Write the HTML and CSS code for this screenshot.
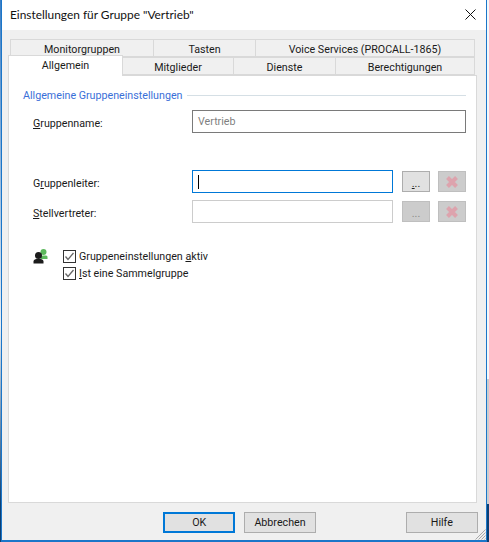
FILE: index.html
```html
<!DOCTYPE html>
<html lang="de">
  <head>
    <meta charset="UTF-8" />
    <title>Einstellungen für Gruppe "Vertrieb"</title>
    <link rel="stylesheet" href="styles.css">
  </head>
  <body>
    <div class="strip strip-left"></div>
    <div class="window">
      <div class="titlebar">
        <span>Einstellungen für Gruppe "Vertrieb"</span>
        <svg class="close" width="11" height="11" viewBox="0 0 11 11">
          <path d="M0.5 0.5L10.5 10.5M10.5 0.5L0.5 10.5" stroke="#111" stroke-width="1" fill="none" />
        </svg>
      </div>

      <div class="client">
        <!-- Tabs -->
        <div class="tabs">
          <div class="tab-row back-row">
            <div class="tab t-monitor">Monitorgruppen</div>
            <div class="tab t-tasten">Tasten</div>
            <div class="tab t-voice">Voice Services (PROCALL-1865)</div>
          </div>
          <div class="tab-row front-row">
            <div class="tab active t-allgemein">Allgemein</div>
            <div class="tab t-mitglieder">Mitglieder</div>
            <div class="tab t-dienste">Dienste</div>
            <div class="tab t-rechte">Berechtigungen</div>
          </div>
        </div>

        <!-- Panel -->
        <div class="panel">
          <div class="legend">
            <span>Allgemeine Gruppeneinstellungen</span>
            <div class="legend-line"></div>
          </div>

          <div class="row row-name">
            <label class="row-label"><u>G</u>ruppenname:</label>
            <div class="input input-name">Vertrieb</div>
          </div>

          <div class="row row-leader">
            <label class="row-label">G<u>r</u>uppenleiter:</label>
            <div class="input input-focus"><i class="caret"></i></div>
            <button class="btn-small btn-dots"><u>.</u>..</button>
            <button class="btn-small btn-off">
              <svg width="14" height="14" viewBox="0 0 14 14"><path d="M2.5 2.5L11.5 11.5M11.5 2.5L2.5 11.5" stroke="#dda3ad" stroke-width="4" fill="none" /></svg>
            </button>
          </div>

          <div class="row row-deputy">
            <label class="row-label"><u>S</u>tellvertreter:</label>
            <div class="input input-off"></div>
            <button class="btn-small btn-off btn-dots-off">...</button>
            <button class="btn-small btn-off">
              <svg width="14" height="14" viewBox="0 0 14 14"><path d="M2.5 2.5L11.5 11.5M11.5 2.5L2.5 11.5" stroke="#dda3ad" stroke-width="4" fill="none" /></svg>
            </button>
          </div>

          <div class="options">
            <svg class="group-icon" width="15" height="15" viewBox="0 0 15 15">
              <circle cx="10.500" cy="3" r="3" fill="#5cb85c" />
              <path d="M8 10V8C8 7 9 6.500 10.500 6.500H12.500C13.700 6.500 14.500 7 14.500 8V10Z" fill="#5cb85c" />
              <circle cx="5.500" cy="6.500" r="3.500" fill="#1c1c1c" />
              <path d="M0.500 14.500V12.500C0.500 11 2 10 3.500 10H7.500C9 10 10.500 11 10.500 12.500V14.500Z" fill="#1c1c1c" />
            </svg>
            <div class="checks">
              <div class="check-row">
                <svg class="check" width="13" height="13" viewBox="0 0 13 13">
                  <rect x="0.500" y="0.500" width="12" height="12" fill="#fff" stroke="#333" />
                  <path d="M2.500 6.500L5 9.500L10.500 3" stroke="#666" stroke-width="1.300" fill="none" />
                </svg>
                <span>Gruppeneinstellungen <u>a</u>ktiv</span>
              </div>
              <div class="check-row">
                <svg class="check" width="13" height="13" viewBox="0 0 13 13">
                  <rect x="0.500" y="0.500" width="12" height="12" fill="#fff" stroke="#333" />
                  <path d="M2.500 6.500L5 9.500L10.500 3" stroke="#666" stroke-width="1.300" fill="none" />
                </svg>
                <span><u>I</u>st eine Sammelgruppe</span>
              </div>
            </div>
          </div>
        </div>

        <!-- Footer -->
        <div class="footer">
          <button class="btn btn-ok">OK</button>
          <button class="btn btn-cancel">Abbrechen</button>
          <button class="btn btn-help">Hilfe</button>
        </div>

        <svg class="grip" width="12" height="12" viewBox="0 0 12 12">
          <path d="M11.500 1.500L1.500 11.500M11.500 4.500L4.500 11.500M11.500 7.500L7.500 11.500M11.500 10.500L10.500 11.500" stroke="#a9a9a9" stroke-width="1" fill="none" />
        </svg>
      </div>
    </div>
    <div class="strip strip-right"></div>
  </body>
</html>
```

FILE: styles.css
```css
* {
  box-sizing: border-box;
  margin: 0;
  padding: 0;
}
html,
body {
  height: 542px;
  overflow: hidden;
}
body {
  display: flex;
  font-family: "Roboto", "Open Sans", sans-serif;
  font-size: 10.7px;
  color: #1a1a1a;
  background: #fff;
}
.strip-left {
  width: 1px;
  background: linear-gradient(#3d7fc4 0, #e8eef4 60%, #0c3f73 93%);
}
.strip-right {
  width: 2px;
  background: linear-gradient(#f4f7fa 0, #f4f7fa 70%, #c9cdd0 70%, #c9cdd0 93%, #0c3f73 93%);
}
.window {
  position: relative;
  width: 486px;
  height: 542px;
  border: 1px solid #1b76c9;
  border-width: 0 1px 2px 1px;
  display: flex;
  flex-direction: column;
}
.titlebar {
  height: 30px;
  flex-shrink: 0;
  background: #fff;
  display: flex;
  justify-content: space-between;
  align-items: center;
  padding: 0 10px 1px 8px;
  font-family: "Lato", "Open Sans", sans-serif;
  font-size: 11.9px;
  color: #111;
}
.client {
  position: relative;
  flex: 1;
  background: #f0f0f0;
  padding: 9px 8px 0 6px;
  display: flex;
  flex-direction: column;
}
.tabs {
  height: 36px;
  flex-shrink: 0;
}
.tab-row {
  display: flex;
  height: 18px;
}
.back-row {
  padding-left: 2px;
}
.tab {
  display: flex;
  align-items: center;
  justify-content: center;
  height: 18px;
  padding-top: 2px;
  border: 1px solid #d9d9d9;
  border-left: 0;
  background: #f0f0f0;
}
.back-row .tab:first-child {
  border-left: 1px solid #d9d9d9;
}
.t-monitor {
  width: 144px;
}
.t-tasten {
  width: 102px;
}
.t-voice {
  width: 219px;
}
.t-allgemein {
  width: 115px;
}
.t-mitglieder {
  width: 111px;
}
.t-dienste {
  width: 102px;
}
.t-rechte {
  width: 139px;
}
.tab.active {
  position: relative;
  z-index: 1;
  height: 21px;
  margin-top: -2px;
  background: #fff;
  border: 1px solid #d9d9d9;
  border-bottom: 0;
  padding: 0 0 2px;
}
.panel {
  height: 428px;
  flex-shrink: 0;
  width: 469px;
  background: #fff;
  border: 1px solid #d9d9d9;
  padding: 11px 10px 0 14px;
}
.legend {
  display: flex;
  align-items: center;
  gap: 5px;
  color: #3a6fd8;
  height: 17px;
}
.legend-line {
  flex: 1;
  height: 1px;
  background: #d5dfe5;
}
.row {
  display: flex;
  align-items: center;
  padding-left: 10px;
}
.row-name {
  margin-top: 6px;
}
.row-leader {
  margin-top: 37px;
}
.row-deputy {
  margin-top: 7px;
}
.row-label {
  width: 159px;
  flex-shrink: 0;
  padding-top: 3px;
}
.input {
  height: 23px;
  background: #fff;
  border: 1px solid #7a7a7a;
  display: flex;
  align-items: center;
  padding-left: 5px;
}
.input-name {
  width: 274px;
  color: #7f7f7f;
}
.input-focus {
  width: 201px;
  border-color: #0078d7;
}
.input-off {
  width: 201px;
  border-color: #cccccc;
}
.caret {
  display: block;
  width: 1px;
  height: 14px;
  background: #000;
}
.btn-small {
  width: 28px;
  height: 21px;
  margin-left: 9px;
  background: #e1e1e1;
  border: 1px solid #adadad;
  font: inherit;
  display: flex;
  align-items: center;
  justify-content: center;
  color: #222;
}
.btn-small + .btn-small {
  margin-left: 8px;
}
.btn-off {
  background: #cccccc;
  border-color: #bfbfbf;
  color: #8a8a8a;
}
.btn-dots,
.btn-dots-off {
  padding-top: 3px;
}
.options {
  display: flex;
  margin: 24px 0 0 10px;
}
.group-icon {
  display: block;
  flex-shrink: 0;
  margin-top: 2px;
}
.checks {
  margin: 1px 0 0 15px;
}
.check-row {
  display: flex;
  align-items: center;
  gap: 3px;
  height: 17px;
}
.check {
  display: block;
  flex-shrink: 0;
}
.footer {
  display: flex;
  padding: 9px 0 0 155px;
}
.btn {
  height: 21px;
  background: #e1e1e1;
  border: 1px solid #adadad;
  font: inherit;
  color: #1a1a1a;
  display: flex;
  align-items: center;
  justify-content: center;
}
.btn-ok {
  width: 73px;
  border: 2px solid #0078d7;
}
.btn-cancel {
  width: 72px;
  margin-left: 9px;
}
.btn-help {
  width: 73px;
  margin-left: 90px;
}
.grip {
  position: absolute;
  right: 0;
  bottom: 0;
}
```
